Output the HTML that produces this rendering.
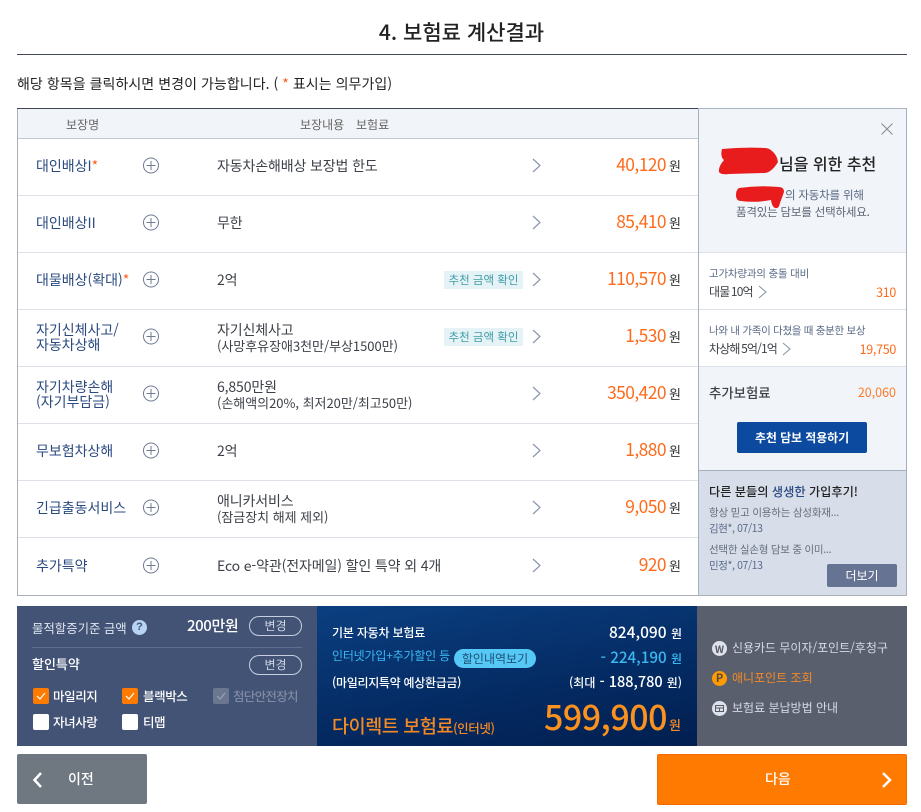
<!DOCTYPE html>
<html lang="ko"><head><meta charset="utf-8">
<style>
html,body{margin:0;padding:0;background:#fff}
#p{position:relative;width:921px;height:812px;overflow:hidden;background:#fff;font-family:"Liberation Sans","Noto Sans CJK KR",sans-serif;color:#333}
#p div,#p span.a,#p svg{position:absolute}
.t{white-space:nowrap;line-height:20px;height:20px}
.n{color:#2b4a80;font-size:14px;left:36px;line-height:15px;white-space:nowrap;font-family:"Noto Sans CJK KR",sans-serif}
.c{color:#3d4148;font-size:14px;left:217px;line-height:15px;white-space:nowrap;letter-spacing:-.13px;font-family:"Noto Sans CJK KR",sans-serif}
.c small{font-size:13px;letter-spacing:-.03px}
.l{left:18px;width:680px;height:1px;background:#dde1e7}
.pr{right:255px;color:#ff6a1a;font-size:17.400px;line-height:24px;white-space:nowrap;letter-spacing:-.55px;font-family:"Noto Sans CJK KR",sans-serif}
.w{left:669px;font-size:13px;line-height:24px;color:#333;font-family:"Noto Sans CJK KR",sans-serif}
.tag{left:444px;width:79px;height:18px;background:#e5f3f6;color:#3f9ca8;font-size:11.5px;line-height:18px;text-align:center;white-space:nowrap;font-family:"Noto Sans CJK KR",sans-serif}
.k{font-family:"Noto Sans CJK KR",sans-serif;white-space:nowrap}
.cb{width:16px;height:16px;border-radius:2px}
.btn{border:1px solid #c5cfe0;border-radius:10px;width:51px;height:18px;line-height:18px;text-align:center;font-size:12px;color:#cfd8e8;left:249px;font-family:"Noto Sans CJK KR",sans-serif}
</style></head><body><div id="p">

<div class="k" style="left:0;width:923px;text-align:center;top:17px;font-size:21px;line-height:30px;color:#222;font-weight:500">4. 보험료 계산결과</div>
<div style="left:17px;top:54px;width:890px;height:1px;background:#444b55"></div>
<div class="k" style="left:17px;top:74px;font-size:14px;line-height:20px;color:#222;letter-spacing:.05px">해당 항목을 클릭하시면 변경이 가능합니다. ( <span style="color:#ff5a1a">*</span> 표시는 의무가입)</div>

<!-- table -->
<div style="left:17px;top:108px;width:888px;height:487px;border:1px solid #a9b0ba;border-top:0;box-sizing:content-box"></div>
<div style="left:17px;top:108px;width:682px;height:1px;background:#3d4657"></div>
<div style="left:699px;top:108px;width:208px;height:1px;background:#a9b5c4"></div>
<div style="left:18px;top:109px;width:680px;height:29px;background:#f1f4f9"></div>
<div style="left:18px;top:138px;width:680px;height:1px;background:#c3c9d2"></div>
<div class="k" style="left:66px;top:116px;font-size:12px;line-height:18px;color:#666">보장명</div>
<div class="k" style="left:300px;top:116px;font-size:12px;line-height:18px;color:#666">보장내용</div>
<div class="k" style="left:356px;top:116px;font-size:12px;line-height:18px;color:#666">보험료</div>

<div class="l" style="top:195px"></div><div class="l" style="top:252px"></div><div class="l" style="top:309px"></div><div class="l" style="top:366px"></div><div class="l" style="top:423px"></div><div class="l" style="top:480px"></div><div class="l" style="top:537px"></div>

<div class="n" style="top:159px">대인배상I<span style="color:#ff5a1a">*</span></div>
<div class="n" style="top:216px">대인배상II</div>
<div class="n" style="top:273px">대물배상(확대)<span style="color:#ff5a1a">*</span></div>
<div class="n" style="top:323px">자기신체사고/<br>자동차상해</div>
<div class="n" style="top:380px">자기차량손해<br>(자기부담금)</div>
<div class="n" style="top:444px">무보험차상해</div>
<div class="n" style="top:501px">긴급출동서비스</div>
<div class="n" style="top:559px">추가특약</div>

<svg style="left:0;top:0" width="700" height="600" fill="none" stroke="#6d7a94" stroke-width="1">
<circle cx="151" cy="165.500" r="7.500"/><path d="M151 161v9M146.500 165.500h9"/>
<circle cx="151" cy="222.500" r="7.500"/><path d="M151 218v9M146.500 222.500h9"/>
<circle cx="151" cy="279.500" r="7.500"/><path d="M151 275v9M146.500 279.500h9"/>
<circle cx="151" cy="336.500" r="7.500"/><path d="M151 332v9M146.500 336.500h9"/>
<circle cx="151" cy="393.500" r="7.500"/><path d="M151 389v9M146.500 393.500h9"/>
<circle cx="151" cy="450.500" r="7.500"/><path d="M151 446v9M146.500 450.500h9"/>
<circle cx="151" cy="507.500" r="7.500"/><path d="M151 503v9M146.500 507.500h9"/>
<circle cx="151" cy="565.500" r="7.500"/><path d="M151 561v9M146.500 565.500h9"/>
<g stroke="#8a96ad" stroke-width="1.200">
<path d="M533 159l7 6.500-7 6.500"/><path d="M533 216l7 6.500-7 6.500"/><path d="M533 273l7 6.500-7 6.500"/><path d="M533 330l7 6.500-7 6.500"/><path d="M533 387l7 6.500-7 6.500"/><path d="M533 444l7 6.500-7 6.500"/><path d="M533 501l7 6.500-7 6.500"/><path d="M533 559l7 6.500-7 6.500"/>
</g>
</svg>

<div class="c" style="top:159px">자동차손해배상 보장법 한도</div>
<div class="c" style="top:216px">무한</div>
<div class="c" style="top:273px">2억</div>
<div class="c" style="top:323px">자기신체사고<br><small>(사망후유장애3천만/부상1500만)</small></div>
<div class="c" style="top:380px">6,850만원<br><small>(손해액의20%, 최저20만/최고50만)</small></div>
<div class="c" style="top:444px">2억</div>
<div class="c" style="top:494px">애니카서비스<br><small>(잠금장치 해제 제외)</small></div>
<div class="c" style="top:559px">Eco e-약관(전자메일) 할인 특약 외 4개</div>

<div class="tag" style="top:271px">추천 금액 확인</div>
<div class="tag" style="top:328px">추천 금액 확인</div>

<div class="pr" style="top:153px">40,120</div><div class="w" style="top:154px">원</div>
<div class="pr" style="top:210px">85,410</div><div class="w" style="top:211px">원</div>
<div class="pr" style="top:267px">110,570</div><div class="w" style="top:268px">원</div>
<div class="pr" style="top:324px">1,530</div><div class="w" style="top:325px">원</div>
<div class="pr" style="top:381px">350,420</div><div class="w" style="top:382px">원</div>
<div class="pr" style="top:438px">1,880</div><div class="w" style="top:439px">원</div>
<div class="pr" style="top:495px">9,050</div><div class="w" style="top:496px">원</div>
<div class="pr" style="top:553px">920</div><div class="w" style="top:554px">원</div>

<!-- side panel -->
<div style="left:698px;top:108px;width:1px;height:488px;background:#a5b0be"></div>
<div style="left:906px;top:108px;width:1px;height:488px;background:#a5b0be"></div>
<div style="left:699px;top:109px;width:207px;height:143px;background:#f1f4f9"></div>
<div style="left:699px;top:252px;width:207px;height:1px;background:#dde1e7"></div>
<div style="left:699px;top:309px;width:207px;height:1px;background:#dde1e7"></div>
<div style="left:699px;top:366px;width:207px;height:104px;background:#f1f4f9;border-top:1px solid #dde1e7"></div>
<div style="left:699px;top:470px;width:207px;height:1px;background:#a5b0be"></div>
<div style="left:699px;top:471px;width:207px;height:124px;background:#d7deea"></div>
<div style="left:17px;top:595px;width:890px;height:1px;background:#a9b0ba"></div>

<svg style="left:880px;top:122px" width="14" height="14" fill="none" stroke="#8a8f9a" stroke-width="1.100"><path d="M1.500 1.500l11 11M12.500 1.500l-11 11"/></svg>
<div class="k" style="left:779px;top:151px;font-size:16px;line-height:24px;color:#222;font-weight:500">님을 위한 추천</div>
<div class="k" style="left:785px;top:187px;font-size:11.500px;line-height:17px;color:#5a6a84;letter-spacing:-.2px">의 자동차를 위해</div>
<div class="k" style="left:736px;top:204px;font-size:11.500px;line-height:17px;color:#5a6472;letter-spacing:-.2px">품격있는 담보를 선택하세요.</div>
<svg style="left:715px;top:145px" width="80" height="70" fill="#e81c1c"><path d="M7 4Q5 12 9 15Q3 22 4 27Q6 30 14 29L50 28Q57 27 63 17Q62 10 57 6Q54 3 50 3Q28 2 7 4z"/><path d="M24 43Q21 45 21 50Q21 56 26 56Q40 58 56 55Q57 62 60 63Q64 64 65 58L69 47Q69 42 64 42Q44 40 24 43z"/></svg>

<div class="k" style="left:709px;top:266px;font-size:10.500px;line-height:16px;color:#5a6a88;letter-spacing:-.2px">고가차량과의 충돌 대비</div>
<div class="k" style="left:709px;top:283px;font-size:12px;line-height:18px;color:#3d4148;letter-spacing:-.85px;word-spacing:-1px">대물 10억</div>
<svg style="left:757px;top:285px" width="12" height="14" fill="none" stroke="#8a96ad" stroke-width="1.100"><path d="M2 1l7 6-7 6"/></svg>
<div class="k" style="right:25px;top:283px;font-size:12.500px;line-height:18px;color:#ff6a1a;letter-spacing:-.3px">310</div>

<div class="k" style="left:709px;top:323px;font-size:10.500px;line-height:16px;color:#5a6a88;letter-spacing:-.3px">나와 내 가족이 다쳤을 때 충분한 보상</div>
<div class="k" style="left:709px;top:340px;font-size:12px;line-height:18px;color:#3d4148;letter-spacing:-.85px;word-spacing:-1px">차상해 5억/1억</div>
<svg style="left:781px;top:342px" width="12" height="14" fill="none" stroke="#8a96ad" stroke-width="1.100"><path d="M2 1l7 6-7 6"/></svg>
<div class="k" style="right:25px;top:340px;font-size:12.500px;line-height:18px;color:#ff6a1a;letter-spacing:-.3px">19,750</div>

<div class="k" style="left:709px;top:382px;font-size:13.400px;line-height:20px;color:#3d4148;font-weight:500">추가보험료</div>
<div class="k" style="right:25px;top:383px;font-size:12.500px;line-height:18px;color:#ff7a2a">20,060</div>
<div class="k" style="left:737px;top:422px;width:130px;height:31px;background:#0b4a9e;border-radius:2px;color:#fff;font-size:12px;font-weight:700;line-height:31px;text-align:center;letter-spacing:-.1px">추천 담보 적용하기</div>

<div class="k" style="left:709px;top:481px;font-size:12.200px;line-height:20px;color:#222;font-weight:500">다른 분들의 <span style="color:#2b4a80">생생한</span> 가입후기!</div>
<div class="k" style="left:709px;top:505px;font-size:10.500px;line-height:16px;color:#666e7c;letter-spacing:-.2px">항상 믿고 이용하는 삼성화재...</div>
<div class="k" style="left:709px;top:521px;font-size:10.500px;line-height:16px;color:#5a6a88;letter-spacing:-.4px">김현*, 07/13</div>
<div class="k" style="left:709px;top:542px;font-size:10.500px;line-height:16px;color:#666e7c;letter-spacing:-.25px">선택한 실손형 담보 중 이미...</div>
<div class="k" style="left:709px;top:558px;font-size:10.500px;line-height:16px;color:#5a6a88;letter-spacing:-.4px">민정*, 07/13</div>
<div class="k" style="left:827px;top:564px;width:70px;height:23px;background:#667392;border-radius:2px;color:#fff;font-size:12px;line-height:23px;text-align:center">더보기</div>

<!-- bottom left -->
<div style="left:17px;top:606px;width:300px;height:140px;background:#435375"></div>
<div class="k" style="left:32px;top:619px;font-size:12.400px;line-height:18px;color:#dfe5f0">물적할증기준 금액</div>
<div style="left:132px;top:620px;width:15px;height:15px;border-radius:50%;background:#b7d3f5;color:#435375;font-size:11px;font-weight:700;line-height:15px;text-align:center">?</div>
<div class="k" style="left:187px;top:616px;font-size:15px;line-height:20px;color:#fff;font-weight:500;letter-spacing:-.4px">200만원</div>
<div class="btn" style="top:616px">변경</div>
<div style="left:32px;top:647px;width:270px;height:1px;background:#5f6f92"></div>
<div class="k" style="left:32px;top:654px;font-size:13px;line-height:20px;color:#fff;font-weight:500">할인특약</div>
<div class="btn" style="top:655px">변경</div>

<div class="cb" style="left:33px;top:688px;background:#ff7a00"></div>
<div class="cb" style="left:122px;top:688px;background:#ff7a00"></div>
<div class="cb" style="left:213px;top:688px;background:#6b7690"></div>
<div class="cb" style="left:33px;top:714px;background:#fff"></div>
<div class="cb" style="left:122px;top:714px;background:#fff"></div>
<svg style="left:0;top:680px" width="240" height="30" fill="none" stroke-width="1.200"><path d="M37 16l3 3 5-6M126 16l3 3 5-6" stroke="#fff"/><path d="M217 16l3 3 5-6" stroke="#98a2b6"/></svg>
<div class="k" style="left:53px;top:687px;font-size:12.500px;line-height:18px;color:#fff;letter-spacing:-.4px;font-weight:500">마일리지</div>
<div class="k" style="left:143px;top:687px;font-size:12.500px;line-height:18px;color:#fff;letter-spacing:-.4px;font-weight:500">블랙박스</div>
<div class="k" style="left:233px;top:687px;font-size:12.500px;line-height:18px;color:#7f8aa3;letter-spacing:-.7px;font-weight:500">첨단안전장치</div>
<div class="k" style="left:53px;top:713px;font-size:12.500px;line-height:18px;color:#fff;letter-spacing:-.4px;font-weight:500">자녀사랑</div>
<div class="k" style="left:143px;top:713px;font-size:12.500px;line-height:18px;color:#fff;letter-spacing:-.4px;font-weight:500">티맵</div>

<!-- bottom center -->
<div style="left:317px;top:606px;width:380px;height:140px;background:linear-gradient(170deg,#0b3f80 0%,#042a62 60%,#021f50 100%)"></div>
<div class="k" style="left:332px;top:623px;font-size:12px;line-height:20px;color:#fff;letter-spacing:-.2px;font-weight:500">기본 자동차 보험료</div>
<div class="k" style="right:239px;top:621px;font-size:15.500px;line-height:22px;color:#fff;font-weight:500"><span>824,090</span> <span style="font-size:12px">원</span></div>
<div class="k" style="left:332px;top:646px;font-size:12px;line-height:20px;color:#3cb8f0;letter-spacing:-.2px">인터넷가입+추가할인 등</div>
<div class="k" style="left:454px;top:649px;width:82px;height:19px;border-radius:10px;background:#55c8f5;color:#1f4f78;font-size:12px;line-height:19px;text-align:center">할인내역보기</div>
<div class="k" style="right:239px;top:646px;font-size:15.200px;line-height:22px;color:#3cb8f0;font-weight:500">- 224,190 <span style="font-size:12px">원</span></div>
<div class="k" style="left:332px;top:673px;font-size:12px;line-height:20px;color:#fff;letter-spacing:-.3px;font-weight:500">(마일리지특약 예상환급금)</div>
<div class="k" style="right:239px;top:671px;font-size:14.500px;line-height:22px;color:#fff;font-weight:500"><span style="font-size:12px">(최대</span> - 188,780 <span style="font-size:12px">원)</span></div>
<div class="k" style="left:332px;top:712px;font-size:18.500px;line-height:28px;color:#f58a24;font-weight:500;letter-spacing:-.4px">다이렉트 보험료<span style="font-size:12.500px">(인터넷)</span></div>
<div class="k" style="right:254px;top:691px;font-size:34px;line-height:50px;color:#fb9220;font-weight:500;letter-spacing:-.5px">599,900</div>
<div class="k" style="left:669px;top:714px;font-size:13px;line-height:22px;color:#f58a24;font-weight:500">원</div>

<!-- bottom right -->
<div style="left:697px;top:606px;width:210px;height:140px;background:#5a5f6d"></div>
<div class="k" style="left:712px;top:641px;width:15px;height:15px;border-radius:50%;background:#dfe2ea;color:#555b68;font-size:10px;font-weight:700;line-height:15px;text-align:center">W</div>
<div class="k" style="left:732px;top:638px;font-size:12px;line-height:20px;color:#d5dae6;letter-spacing:-.03px">신용카드 무이자/포인트/후청구</div>
<div class="k" style="left:712px;top:671px;width:15px;height:15px;border-radius:50%;background:#ff9a00;color:#4b4a48;font-size:11px;font-weight:700;line-height:15px;text-align:center">P</div>
<div class="k" style="left:732px;top:668px;font-size:12px;line-height:20px;color:#f58a24">애니포인트 조회</div>
<div style="left:712px;top:701px;width:15px;height:15px;border-radius:50%;background:#dfe2ea"></div>
<svg style="left:712px;top:701px" width="15" height="15" fill="none" stroke="#555b68" stroke-width="1"><path d="M3.500 4.500h8v6h-8zM3.500 7h8M7.500 7v3.500"/></svg>
<div class="k" style="left:732px;top:698px;font-size:12px;line-height:20px;color:#d5dae6">보험료 분납방법 안내</div>

<!-- nav buttons -->
<div class="k" style="left:17px;top:754px;width:130px;height:50px;background:#6f7780;border-radius:2px"></div>
<svg style="left:31px;top:771px" width="14" height="18" fill="none" stroke="#fff" stroke-width="2.500"><path d="M10 2L3.500 9l6.500 7"/></svg>
<div class="k" style="left:68px;top:768px;font-size:14px;line-height:22px;color:#fff;font-weight:500">이전</div>
<div class="k" style="left:657px;top:754px;width:250px;height:51px;background:#ff7a00;border:1px solid #f56a00;box-sizing:border-box;border-radius:2px"></div>
<div class="k" style="left:765px;top:768px;font-size:14px;line-height:22px;color:#fff;font-weight:500">다음</div>
<svg style="left:880px;top:771px" width="14" height="18" fill="none" stroke="#fff" stroke-width="2.500"><path d="M3 2l7 7-7 7"/></svg>

</div></body></html>
